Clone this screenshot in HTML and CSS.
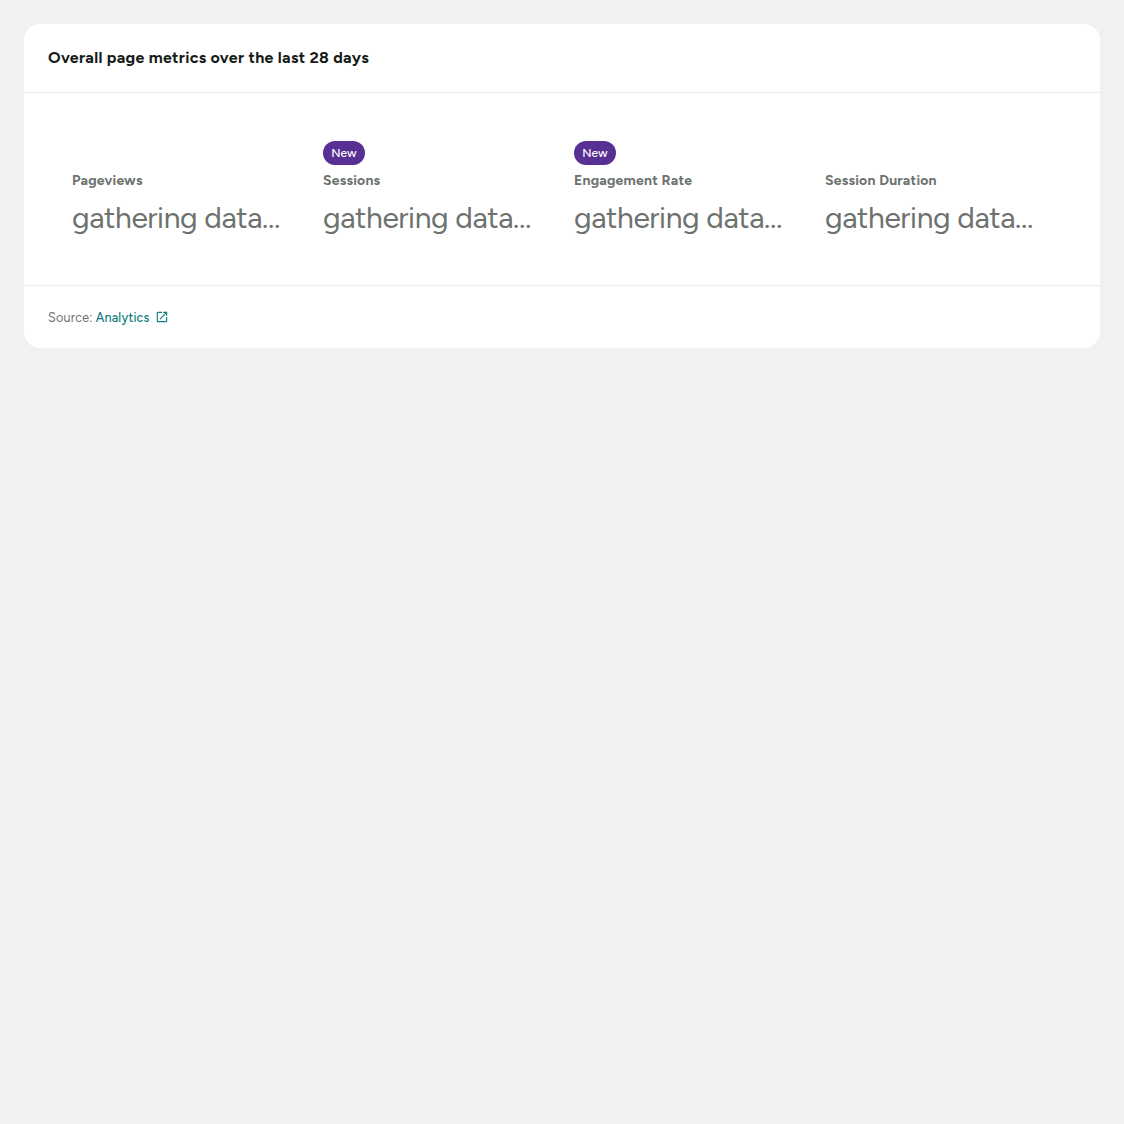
FILE: index.html
```html
<!DOCTYPE html>
<html lang="en">
<head>
<meta charset="utf-8">
<title>Page metrics</title>
<link rel="stylesheet" href="styles.css">
</head>
<body>
<section class="widget">
  <header class="widget-header"><h3 class="widget-title">Overall page metrics over the last 28 days</h3></header>
  <div class="widget-body">
    <div class="metric">
      <h4 class="metric-title">Pageviews</h4>
      <div class="metric-value">gathering data…</div>
    </div>
    <div class="metric">
      <span class="badge">New</span>
      <h4 class="metric-title">Sessions</h4>
      <div class="metric-value">gathering data…</div>
    </div>
    <div class="metric">
      <span class="badge">New</span>
      <h4 class="metric-title">Engagement Rate</h4>
      <div class="metric-value">gathering data…</div>
    </div>
    <div class="metric">
      <h4 class="metric-title">Session Duration</h4>
      <div class="metric-value">gathering data…</div>
    </div>
  </div>
  <footer class="widget-footer">
    <span class="source">Source:</span>
    <a class="source-link" href="#"><span class="link-text">Analytics</span><svg class="external" viewBox="0 0 24 24" width="14" height="14"><path fill="currentColor" d="M19 19H5V5h7V3H5a2 2 0 0 0-2 2v14a2 2 0 0 0 2 2h14c1.100 0 2-.9 2-2v-7h-2v7zM14 3v2h3.590l-9.830 9.830 1.410 1.410L19 6.410V10h2V3h-7z"/></svg></a>
  </footer>
</section>
</body>
</html>
```
FILE: styles.css
```css
* { box-sizing: border-box; }
body {
  margin: 0;
  padding: 24px;
  background: #f1f1f1;
  font-family: "Google Sans", Figtree, Lato, sans-serif;
}
.widget {
  height: 324px;
  background: #fff;
  border-radius: 16px;
  display: flex;
  flex-direction: column;
}
.widget-header {
  height: 69px;
  padding: 22px 24px;
  border-bottom: 1px solid #ebeef0;
}
.widget-title {
  margin: 0;
  font-size: 16px;
  line-height: 24px;
  font-weight: 700;
  letter-spacing: 0.3px;
  color: #161b18;
}
.widget-body {
  height: 192px;
  padding: 48px;
  display: grid;
  grid-template-columns: repeat(4, 227px);
  column-gap: 24px;
}
.metric {
  display: flex;
  flex-direction: column;
  align-items: flex-start;
  justify-content: flex-end;
}
.badge {
  height: 24px;
  width: 42px;
  border-radius: 12px;
  background: #583094;
  color: #fff;
  font-size: 12px;
  font-weight: 500;
  line-height: 24px;
  letter-spacing: 0.15px;
  text-align: center;
  margin-bottom: 6px;
}
.metric-title {
  margin: 0;
  font-size: 14px;
  line-height: 20px;
  font-weight: 700;
  letter-spacing: 0.22px;
  color: #6c726e;
}
.metric-value {
  margin-top: 9px;
  height: 37px;
  font-size: 30px;
  line-height: 36px;
  letter-spacing: -0.4px;
  white-space: nowrap;
  color: #6c726e;
}
.widget-footer {
  flex: 1;
  border-top: 1px solid #ebeef0;
  padding: 0 24px;
  display: flex;
  align-items: center;
  gap: 3px;
  font-size: 12.5px;
  letter-spacing: 0.25px;
  color: #6c726e;
}
.source-link {
  display: flex;
  align-items: center;
  gap: 5px;
  font-weight: 500;
  letter-spacing: 0.22px;
  color: #108080;
  text-decoration: none;
}
```
